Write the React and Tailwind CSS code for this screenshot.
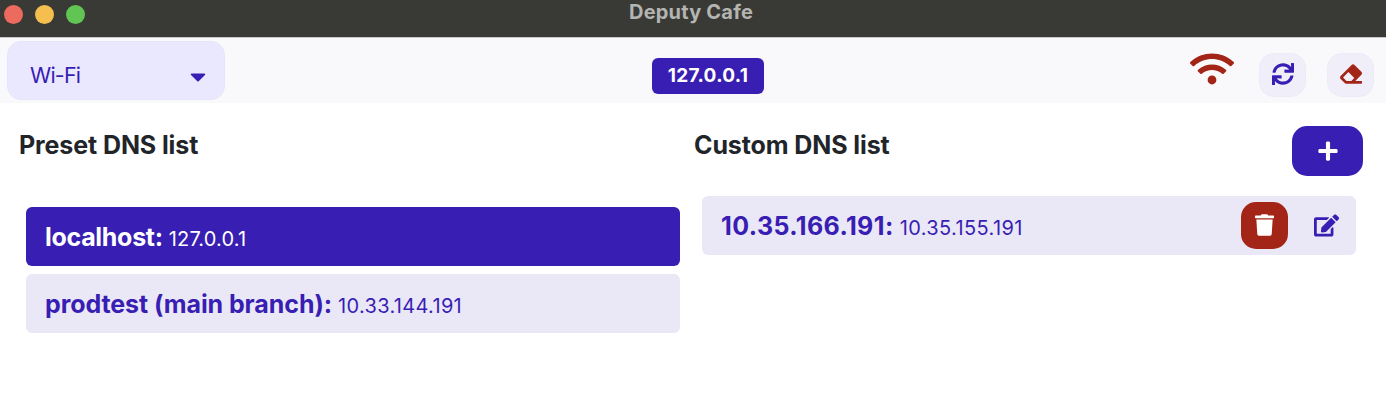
import { FaWifi, FaSync, FaEraser, FaPlus, FaTrash, FaEdit, FaCaretDown } from "react-icons/fa";

function TitleBar() {
  return (
    <header className="grid h-[37px] grid-cols-3 items-start bg-[#393936]">
      <div className="flex gap-3 pt-[5px] pl-1">
        <span className="h-[19px] w-[19px] rounded-full bg-[#ed6a5e]" />
        <span className="h-[19px] w-[19px] rounded-full bg-[#f4bf4f]" />
        <span className="h-[19px] w-[19px] rounded-full bg-[#61c554]" />
      </div>
      <h1 className="pl-[167px] text-[20px] leading-6 font-bold tracking-[0.2px] whitespace-nowrap text-[#b4b4b1]">
        Deputy Cafe
      </h1>
    </header>
  );
}

function Toolbar() {
  return (
    <div className="flex h-[66px] items-start border-t border-[#c9c9cb] bg-[#f9f9fc] pt-[3px] pr-3 pl-[7px]">
      <button className="flex h-[59px] w-[218px] items-center justify-between rounded-[14px] border border-[#e7e5fa] bg-[#eae8fe] pt-2.5 pr-[18px] pl-[22px] text-[21.5px] text-[#381eb3]">
        <span className="tracking-[-0.8px]">Wi-Fi</span>
        <FaCaretDown className="mt-0.5 h-[25px] w-[16px]" />
      </button>
      <div className="mt-[17px] ml-[427px] flex h-9 w-[112px] items-center justify-center rounded-md bg-[#381eb3] pt-px text-[19px] font-bold tracking-[0.3px] text-white">
        127.0.0.1
      </div>
      <div className="mt-3 ml-auto flex items-start">
        <FaWifi className="-mt-0.5 mr-[25px] h-[36px] w-[44px] text-[#a22517]" />
        <button className="flex h-11 w-[47px] items-center justify-center rounded-[15px] border border-[#edebf7] bg-[#f0eef8] pb-0.5 text-[#381eb3]">
          <FaSync className="h-[22px] w-[22px]" />
        </button>
        <button className="ml-[21px] flex h-11 w-[47px] items-center justify-center rounded-[15px] border border-[#edebf7] bg-[#f0eef8] pb-0.5 text-[#a22517]">
          <FaEraser className="h-[22px] w-[22px]" />
        </button>
      </div>
    </div>
  );
}

function DnsRow({ name, address, active, nameClass, addressClass, children }) {
  return (
    <li
      className={
        "flex h-[59px] w-[654px] items-center rounded-md pl-[19px] " +
        (active ? "bg-[#381eb3] text-white" : "bg-[#eae8f6] text-[#381eb3]")
      }
    >
      <p className="flex items-baseline gap-[6px] pt-0.5 whitespace-nowrap">
        <span className={"text-[25px] font-bold " + nameClass}>{name}:</span>
        <span className={"text-[20px] " + addressClass}>{address}</span>
      </p>
      {children}
    </li>
  );
}

export default function App() {
  return (
    <div className="h-[418px] overflow-hidden bg-white font-['Inter','Liberation_Sans',sans-serif]">
      <TitleBar />
      <Toolbar />
      <main className="flex">
        <section className="w-[694px] pt-[24px] pl-[19px]">
          <h2 className="text-[25px] leading-9 font-bold tracking-[-0.1px] text-[#212529]">Preset DNS list</h2>
          <ul className="mt-[44px] ml-[7px] flex flex-col gap-2">
            <DnsRow
              name="localhost"
              address="127.0.0.1"
              nameClass="tracking-[-0.3px]"
              addressClass="tracking-[0.15px]"
              active
            />
            <DnsRow
              name="prodtest (main branch)"
              address="10.33.144.191"
              nameClass="tracking-[-0.08px]"
              addressClass="tracking-[0.33px]"
            />
          </ul>
        </section>
        <section className="flex-1 pt-[23px]">
          <div className="flex items-start justify-between pr-[23px]">
            <h2 className="pt-px text-[25px] leading-9 font-bold tracking-[-0.1px] text-[#212529]">Custom DNS list</h2>
            <button className="flex h-[50px] w-[71px] items-center justify-center rounded-[15px] bg-[#381eb3] text-white">
              <FaPlus className="h-[22px] w-[22px]" />
            </button>
          </div>
          <ul className="mt-5 ml-2">
            <DnsRow
              name="10.35.166.191"
              address="10.35.155.191"
              nameClass="tracking-[0.4px]"
              addressClass="tracking-[0.38px]"
            >
              <div className="ml-auto flex items-center pr-[17px]">
                <button className="flex h-[47px] w-[47px] items-center justify-center rounded-[15px] bg-[#a22517] pr-px pb-px text-white">
                  <FaTrash className="h-[22px] w-[19px]" />
                </button>
                <FaEdit className="ml-[26px] h-[23px] w-[25px]" />
              </div>
            </DnsRow>
          </ul>
        </section>
      </main>
    </div>
  );
}
